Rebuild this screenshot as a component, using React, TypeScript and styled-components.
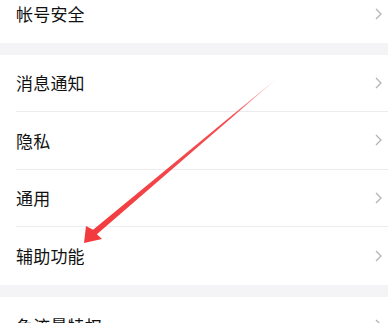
import React from "react";
import styled, { createGlobalStyle } from "styled-components";

const GlobalStyle = createGlobalStyle`
  html, body {
    margin: 0;
    padding: 0;
    background: #f4f4f7;
    overflow: hidden;
  }
  body {
    font-family: "Noto Sans CJK SC", "Noto Sans", sans-serif;
  }
`;

const Page = styled.div`
  position: relative;
  width: 388px;
  height: 323px;
  overflow: hidden;
`;

const List = styled.div`
  display: flex;
  flex-direction: column;
  gap: 12px;
  margin-top: -15px;
`;

const Group = styled.div`
  display: flex;
  flex-direction: column;
  background: #fff;
`;

const Row = styled.div`
  display: flex;
  align-items: stretch;
  height: 57.5px;
  padding-left: 16px;
  box-sizing: border-box;
`;

const RowInner = styled.div<{ $last?: boolean }>`
  flex: 1;
  display: flex;
  align-items: center;
  justify-content: space-between;
  padding-right: 6px;
  border-bottom: ${(p) => (p.$last ? "none" : "1px solid #ececec")};
`;

const Label = styled.span`
  font-size: 17px;
  color: #111;
  letter-spacing: 0.2px;
`;

const Chevron = styled.svg`
  width: 7px;
  height: 12px;
  display: block;
`;

const Arrow = styled.svg`
  position: absolute;
  left: 0;
  top: 0;
  width: 388px;
  height: 323px;
  pointer-events: none;
`;

const groups: string[][] = [
  ["帐号安全"],
  ["消息通知", "隐私", "通用", "辅助功能"],
  ["免流量特权"],
];

const ChevronIcon = () => (
  <Chevron viewBox="0 0 7 12">
    <path d="M1 1 L6 6 L1 11" fill="none" stroke="#b3b3b3" strokeWidth="1.3" />
  </Chevron>
);

export default function App() {
  return (
    <Page>
      <GlobalStyle />
      <List>
        {groups.map((items, gi) => (
          <Group key={gi}>
            {items.map((name, i) => (
              <Row key={name}>
                <RowInner $last={i === items.length - 1}>
                  <Label>{name}</Label>
                  <ChevronIcon />
                </RowInner>
              </Row>
            ))}
          </Group>
        ))}
      </List>
      <Arrow viewBox="0 0 388 323">
        <defs>
          <linearGradient id="fade" x1="281" y1="75" x2="90" y2="238" gradientUnits="userSpaceOnUse">
            <stop offset="0" stopColor="#f23b3f" stopOpacity="0.05" />
            <stop offset="0.25" stopColor="#f23b3f" stopOpacity="0.9" />
            <stop offset="1" stopColor="#f23b3f" stopOpacity="1" />
          </linearGradient>
        </defs>
        <path
          d="M281 75 L96.9 234.3 L102 239 L84 243 L86 226 L93.1 229.7 Z"
          fill="url(#fade)"
        />
      </Arrow>
    </Page>
  );
}
